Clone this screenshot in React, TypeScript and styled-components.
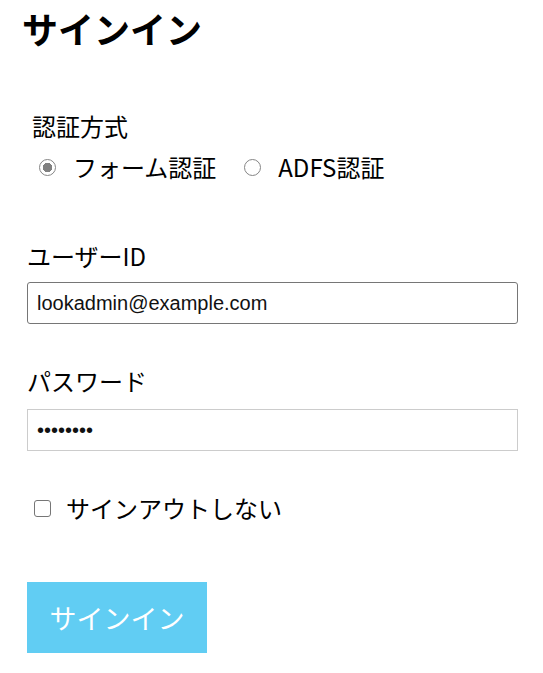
import { createGlobalStyle, styled } from "styled-components"

const GlobalStyle = createGlobalStyle`
  body {
    margin: 0;
    background: #fff;
    color: #000;
    font-family: "Noto Sans CJK JP", "Noto Sans", sans-serif;
  }
`

const Page = styled.main`
  display: flex;
  flex-direction: column;
  align-items: flex-start;
  padding: 0 26px 0 27px;
`

const Title = styled.h1`
  margin: 6px 0 0 -5px;
  font-size: 36px;
  line-height: 44px;
  font-weight: 700;
`

const AuthGroup = styled.div`
  display: flex;
  flex-direction: column;
  margin-top: 62px;
  padding-left: 5px;
`

const Label = styled.label<{ $gap?: number }>`
  display: block;
  margin-top: ${(p) => p.$gap ?? 0}px;
  font-size: 24px;
  line-height: 28px;
`

const RadioRow = styled.div`
  display: flex;
  align-items: center;
  gap: 28px;
  margin-top: 13px;
  padding-left: 7px;
`

const Option = styled.label`
  display: flex;
  align-items: center;
  gap: 17px;
  font-size: 24px;
  line-height: 28px;
`

const Radio = styled.input.attrs({ type: "radio" })`
  appearance: none;
  margin: 0;
  width: 17px;
  height: 17px;
  border: 1.5px solid #858585;
  border-radius: 50%;
  background: #fff;
  box-sizing: border-box;
  &:checked {
    background: radial-gradient(circle, #808080 0 4.5px, #fff 5px);
  }
`

const TextInput = styled.input<{ $soft?: boolean }>`
  box-sizing: border-box;
  width: 491px;
  height: 42px;
  margin-top: ${(p) => (p.$soft ? 14 : 12)}px;
  padding: 0 9px;
  border: 1px solid ${(p) => (p.$soft ? "#cccccc" : "#767676")};
  border-radius: ${(p) => (p.$soft ? 0 : 3)}px;
  font-family: "Liberation Sans", Arial, sans-serif;
  font-size: 20px;
  color: #111;
  outline: none;
`

const CheckRow = styled.label`
  display: flex;
  align-items: center;
  gap: 15px;
  margin-top: 43px;
  padding-left: 7px;
  font-size: 24px;
  line-height: 28px;
`

const Checkbox = styled.input.attrs({ type: "checkbox" })`
  appearance: none;
  margin: 0;
  width: 17px;
  height: 17px;
  box-sizing: border-box;
  border: 1.5px solid #767676;
  border-radius: 3px;
  background: #fff;
`

const SubmitButton = styled.button`
  margin-top: 60px;
  width: 180px;
  height: 71px;
  border: none;
  background: #61cdf3;
  color: #fff;
  font-family: "Noto Sans CJK JP", sans-serif;
  font-size: 27px;
  cursor: pointer;
`

export default function App() {
  return (
    <>
      <GlobalStyle />
      <Page>
        <Title>サインイン</Title>

        <AuthGroup>
          <Label>認証方式</Label>
          <RadioRow>
            <Option>
              <Radio name="auth" defaultChecked />
              フォーム認証
            </Option>
            <Option>
              <Radio name="auth" />
              ADFS認証
            </Option>
          </RadioRow>
        </AuthGroup>

        <Label $gap={61}>ユーザーID</Label>
        <TextInput defaultValue="lookadmin@example.com" />

        <Label $gap={43}>パスワード</Label>
        <TextInput $soft type="password" defaultValue="password" />

        <CheckRow>
          <Checkbox />
          サインアウトしない
        </CheckRow>

        <SubmitButton>サインイン</SubmitButton>
      </Page>
    </>
  )
}
